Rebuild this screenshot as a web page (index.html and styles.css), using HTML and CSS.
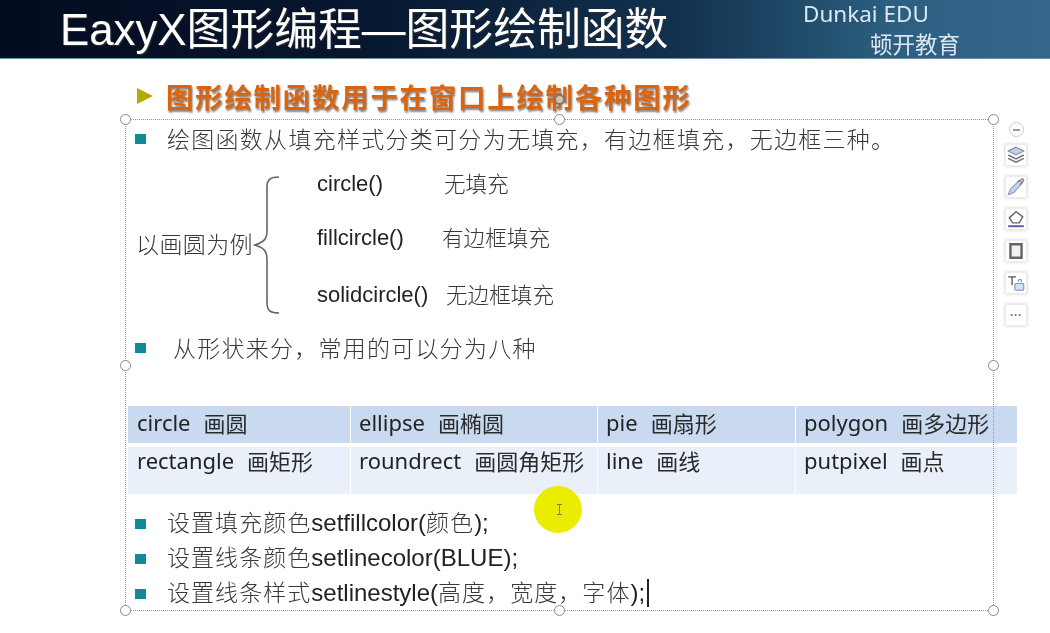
FILE: index.html
```html
<!DOCTYPE html>
<html lang="zh">
<head>
<meta charset="utf-8">
<title>EaxyX图形编程—图形绘制函数</title>
<link rel="stylesheet" href="styles.css">
</head>
<body>
<div class="page">
  <header class="banner">
    <h1 class="title">EaxyX图形编程—图形绘制函数</h1>
    <div class="brand">
      <div class="brand-en">Dunkai EDU</div>
      <div class="brand-cn">顿开教育</div>
    </div>
  </header>

  <main class="slide">
    <h2 class="heading"><span class="arrow"></span><span class="heading-text">图形绘制函数用于在窗口上绘制各种图形</span></h2>

    <p class="item item-first"><span class="bullet"></span><span class="cjk lead">绘图函数从填充样式分类可分为无填充，有边框填充，无边框三种。</span></p>

    <section class="example">
      <div class="example-label cjk">以画圆为例</div>
      <svg class="brace" width="28" height="140" viewBox="0 0 28 140" fill="none">
        <path d="M26 2 C18 2 14 4 14 12 V56 C14 64 11 67 2 70 C11 73 14 76 14 84 V128 C14 136 18 138 26 138" stroke="#666" stroke-width="1.6"/>
      </svg>
      <div class="fn-list">
        <div class="fn-row fn-a"><span class="fn fn-1">circle()</span><span class="cjk-tight">无填充</span></div>
        <div class="fn-row fn-b"><span class="fn fn-2">fillcircle()</span><span class="cjk-tight">有边框填充</span></div>
        <div class="fn-row fn-c"><span class="fn fn-3">solidcircle()</span><span class="cjk-tight">无边框填充</span></div>
      </div>
    </section>

    <p class="item item-second"><span class="bullet"></span><span class="cjk indent">从形状来分，常用的可以分为八种</span></p>

    <div class="table">
      <div class="cell head c1"><span class="en">circle</span><span class="zh">画圆</span></div>
      <div class="cell head c2"><span class="en">ellipse</span><span class="zh">画椭圆</span></div>
      <div class="cell head c3"><span class="en">pie</span><span class="zh">画扇形</span></div>
      <div class="cell head c4"><span class="en">polygon</span><span class="zh">画多边形</span></div>
      <div class="cell body c1"><span class="en">rectangle</span><span class="zh">画矩形</span></div>
      <div class="cell body c2"><span class="en">roundrect</span><span class="zh">画圆角矩形</span></div>
      <div class="cell body c3"><span class="en">line</span><span class="zh">画线</span></div>
      <div class="cell body c4"><span class="en">putpixel</span><span class="zh">画点</span></div>
    </div>

    <ul class="setters">
      <li class="item"><span class="bullet"></span><span class="cjk">设置填充颜色</span><span class="code">setfillcolor(</span><span class="cjk">颜色</span><span class="code">);</span></li>
      <li class="item"><span class="bullet"></span><span class="cjk">设置线条颜色</span><span class="code">setlinecolor(BLUE);</span></li>
      <li class="item"><span class="bullet"></span><span class="cjk">设置线条样式</span><span class="code">setlinestyle(</span><span class="cjk">高度，宽度，字体</span><span class="code">);</span><span class="caret"></span></li>
    </ul>
  </main>

  <div class="selection">
    <span class="rotate"></span>
    <span class="handle h-tl"></span><span class="handle h-tc"></span><span class="handle h-tr"></span>
    <span class="handle h-ml"></span><span class="handle h-mr"></span>
    <span class="handle h-bl"></span><span class="handle h-bc"></span><span class="handle h-br"></span>
  </div>

  <div class="toolbar">
    <div class="collapse"><span></span></div>
    <div class="tool">
      <svg width="20" height="20" viewBox="0 0 18 18" fill="none"><path d="M9 2 L16 5.5 L9 9 L2 5.5 Z" fill="#c5cfe8" stroke="#7f8aa8"/><path d="M2 9 L9 12.5 L16 9" stroke="#6d7480" stroke-width="1.3"/><path d="M2 12 L9 15.5 L16 12" stroke="#6d7480" stroke-width="1.3"/></svg>
    </div>
    <div class="tool">
      <svg width="20" height="20" viewBox="0 0 18 18" fill="none"><path d="M2 16 L4 11 L12 3 L15 5 L7 14 Z" fill="#c5d4ee" stroke="#8a9bbd"/><path d="M10.5 4.5 L15 1.5 L16 3 L12.5 7" stroke="#777"/></svg>
    </div>
    <div class="tool">
      <svg width="20" height="20" viewBox="0 0 18 18" fill="none"><path d="M3 8 L9 2.5 L15 7 L12 12.5 H6 Z" fill="#fff" stroke="#666" stroke-width="1.3"/><path d="M2 15.5 H16" stroke="#5a5fa8" stroke-width="1.8"/></svg>
    </div>
    <div class="tool">
      <svg width="20" height="20" viewBox="0 0 18 18" fill="none"><path d="M4 15 V3 H14 V15 Z" fill="#f2f2f2" stroke="#666" stroke-width="2.2"/></svg>
    </div>
    <div class="tool">
      <svg width="20" height="20" viewBox="0 0 18 18" fill="none"><path d="M2 3.5 H9 M5.5 3.5 V11" stroke="#555" stroke-width="1.2"/><rect x="8" y="9.5" width="8" height="6" rx="1" fill="#d3dff2" stroke="#7d93bd"/><path d="M11 8 C11 5 14 5 14 8" stroke="#8a9bbd"/></svg>
    </div>
    <div class="tool tool-more">···</div>
  </div>

  <div class="pointer"><span class="ibeam"></span></div>
</div>
</body>
</html>
```

FILE: styles.css
```css
* { box-sizing: border-box; }
html, body { margin: 0; padding: 0; background: #fff; }
.page {
  position: relative;
  width: 1050px;
  height: 633px;
  overflow: hidden;
  background: #fff;
  font-family: "Liberation Sans", "Noto Sans CJK SC", sans-serif;
  filter: blur(0.45px);
}

.banner {
  height: 59px;
  display: flex;
  justify-content: space-between;
  padding-left: 60px;
  background: linear-gradient(90deg, #040c1f 0%, #071730 35%, #12324f 65%, #2c5f80 85%, #33668a 100%);
  border-bottom: 1px solid #6f8ea6;
  color: #fff;
}
.title {
  margin: 0;
  font-size: 43.8px;
  font-weight: 400;
  line-height: 60px;
  white-space: nowrap;
  text-shadow: 1px 1px 1px #333;
  font-family: "Liberation Sans", "Noto Sans CJK SC", sans-serif;
}
.brand { width: 247px; color: #dfe7ee; font-family: "Noto Sans", "Noto Sans CJK SC", sans-serif; font-size: 22.5px; line-height: 28px; }
.brand-cn { margin-left: 67px; margin-top: 1px; font-family: "Noto Sans CJK SC", sans-serif; }

.slide { padding-left: 128px; width: 1017px; }

.heading {
  display: flex;
  align-items: center;
  height: 34px;
  margin: 20px 0 0 9px;
  font-family: "Noto Sans CJK SC", sans-serif;
  font-size: 27.5px;
  font-weight: 700;
}
.arrow {
  width: 0; height: 0;
  border-left: 16px solid #b5a800;
  border-top: 8px solid transparent;
  border-bottom: 8px solid transparent;
  margin-right: 13px;
}
.heading-text { color: #dc640e; letter-spacing: 1.7px; text-shadow: 1px 2px 2px #888; white-space: nowrap; }

.item { display: flex; align-items: center; margin: 0; height: 34px; font-size: 23px; color: #222; white-space: nowrap; }
.item-first { margin-top: 8px; }
.item-second { margin-top: 11px; }
.bullet { width: 11px; height: 10px; background: #0f8a96; margin: 2px 21px 0 7px; flex: none; }
.cjk { font-family: "Noto Sans CJK SC", sans-serif; font-size: 23px; letter-spacing: 1.05px; color: #383838; font-weight: 300; }
.lead { letter-spacing: 1.28px; }
.indent { margin-left: 6px; letter-spacing: 1.25px; }
.code { font-family: "Liberation Sans", sans-serif; font-size: 24px; color: #222; }
.caret { width: 2px; height: 28px; background: #222; margin-left: 2px; }

.example { display: flex; align-items: center; height: 156px; margin-top: 8px; padding-left: 8px; }
.example-label { width: 117px; letter-spacing: 0.4px; flex: none; margin-top: 4px; white-space: nowrap; }
.brace { flex: none; margin-top: 8px; }
.fn-list { margin-left: 36px; display: flex; flex-direction: column; height: 156px; }
.fn-row { display: flex; align-items: center; height: 30px; font-size: 22px; color: #222; white-space: nowrap; }
.fn-a { margin-top: 4px; }
.fn-b { margin-top: 24px; }
.fn-c { margin-top: 27px; }
.fn { padding-top: 4px; }
.fn-1 { width: 127px; }
.fn-2 { width: 125px; }
.fn-3 { width: 129px; }
.cjk-tight { font-family: "Noto Sans CJK SC", sans-serif; font-weight: 300; color: #383838; font-size: 21.6px; }

.table {
  display: grid;
  grid-template-columns: 222px 246px 197px 221px;
  grid-template-rows: 37px 47px;
  row-gap: 4px;
  column-gap: 1px;
  width: 889px;
  margin-top: 42px;
}
.cell { display: flex; align-items: flex-start; padding-left: 9px; font-family: "Noto Sans", "Noto Sans CJK SC", sans-serif; font-size: 22px; color: #222; white-space: nowrap; }
.head { background: #c9daf0; line-height: 32px; }
.body { background: #e9f0f9; line-height: 26px; }
.c2, .c3, .c4 { padding-left: 8px; }
.en { margin-right: 13px; }
.zh { font-family: "Noto Sans CJK SC", sans-serif; color: #2a2a2a; }

.setters { list-style: none; margin: 11px 0 0; padding: 0; }
.setters .item { height: 35px; }
.setters .cjk { margin-bottom: 3px; }

.selection {
  position: absolute;
  left: 125px; top: 119px;
  width: 869px; height: 492px;
  border: 1px dotted #999;
}
.handle, .rotate {
  position: absolute;
  width: 11px; height: 11px;
  border-radius: 50%;
  border: 1px solid #888;
  background: #fff;
}
.rotate { left: 428px; top: -26px; border: 2px solid #777; background: #d9c0a8; }
.h-tl { left: -6px; top: -6px; }
.h-tc { left: 428px; top: -6px; }
.h-tr { right: -6px; top: -6px; }
.h-ml { left: -6px; top: 240px; }
.h-mr { right: -6px; top: 240px; }
.h-bl { left: -6px; bottom: -6px; }
.h-bc { left: 428px; bottom: -6px; }
.h-br { right: -6px; bottom: -6px; }

.toolbar { position: absolute; left: 1005px; top: 122px; width: 22px; display: flex; flex-direction: column; align-items: center; gap: 10px; }
.collapse { width: 15px; height: 15px; border: 1px solid #ccc; border-radius: 50%; display: flex; align-items: center; justify-content: center; margin-bottom: -3px; }
.collapse span { width: 7px; height: 2px; background: #999; }
.tool { width: 22px; height: 22px; background: #fff; border: 1px solid #ececec; box-shadow: 0 0 3px #ccc; display: flex; align-items: center; justify-content: center; color: #777; font-size: 12px; }
.tool-more { font-weight: 700; }

.pointer {
  position: absolute;
  left: 534px; top: 486px;
  width: 48px; height: 47px;
  border-radius: 50%;
  background: #ecec00;
  display: flex; align-items: center; justify-content: center;
}
.ibeam { width: 5px; height: 11px; border-top: 1px solid #777; border-bottom: 1px solid #777; background: linear-gradient(#777, #777) center / 1px 100% no-repeat; margin-left: 3px; }
```
